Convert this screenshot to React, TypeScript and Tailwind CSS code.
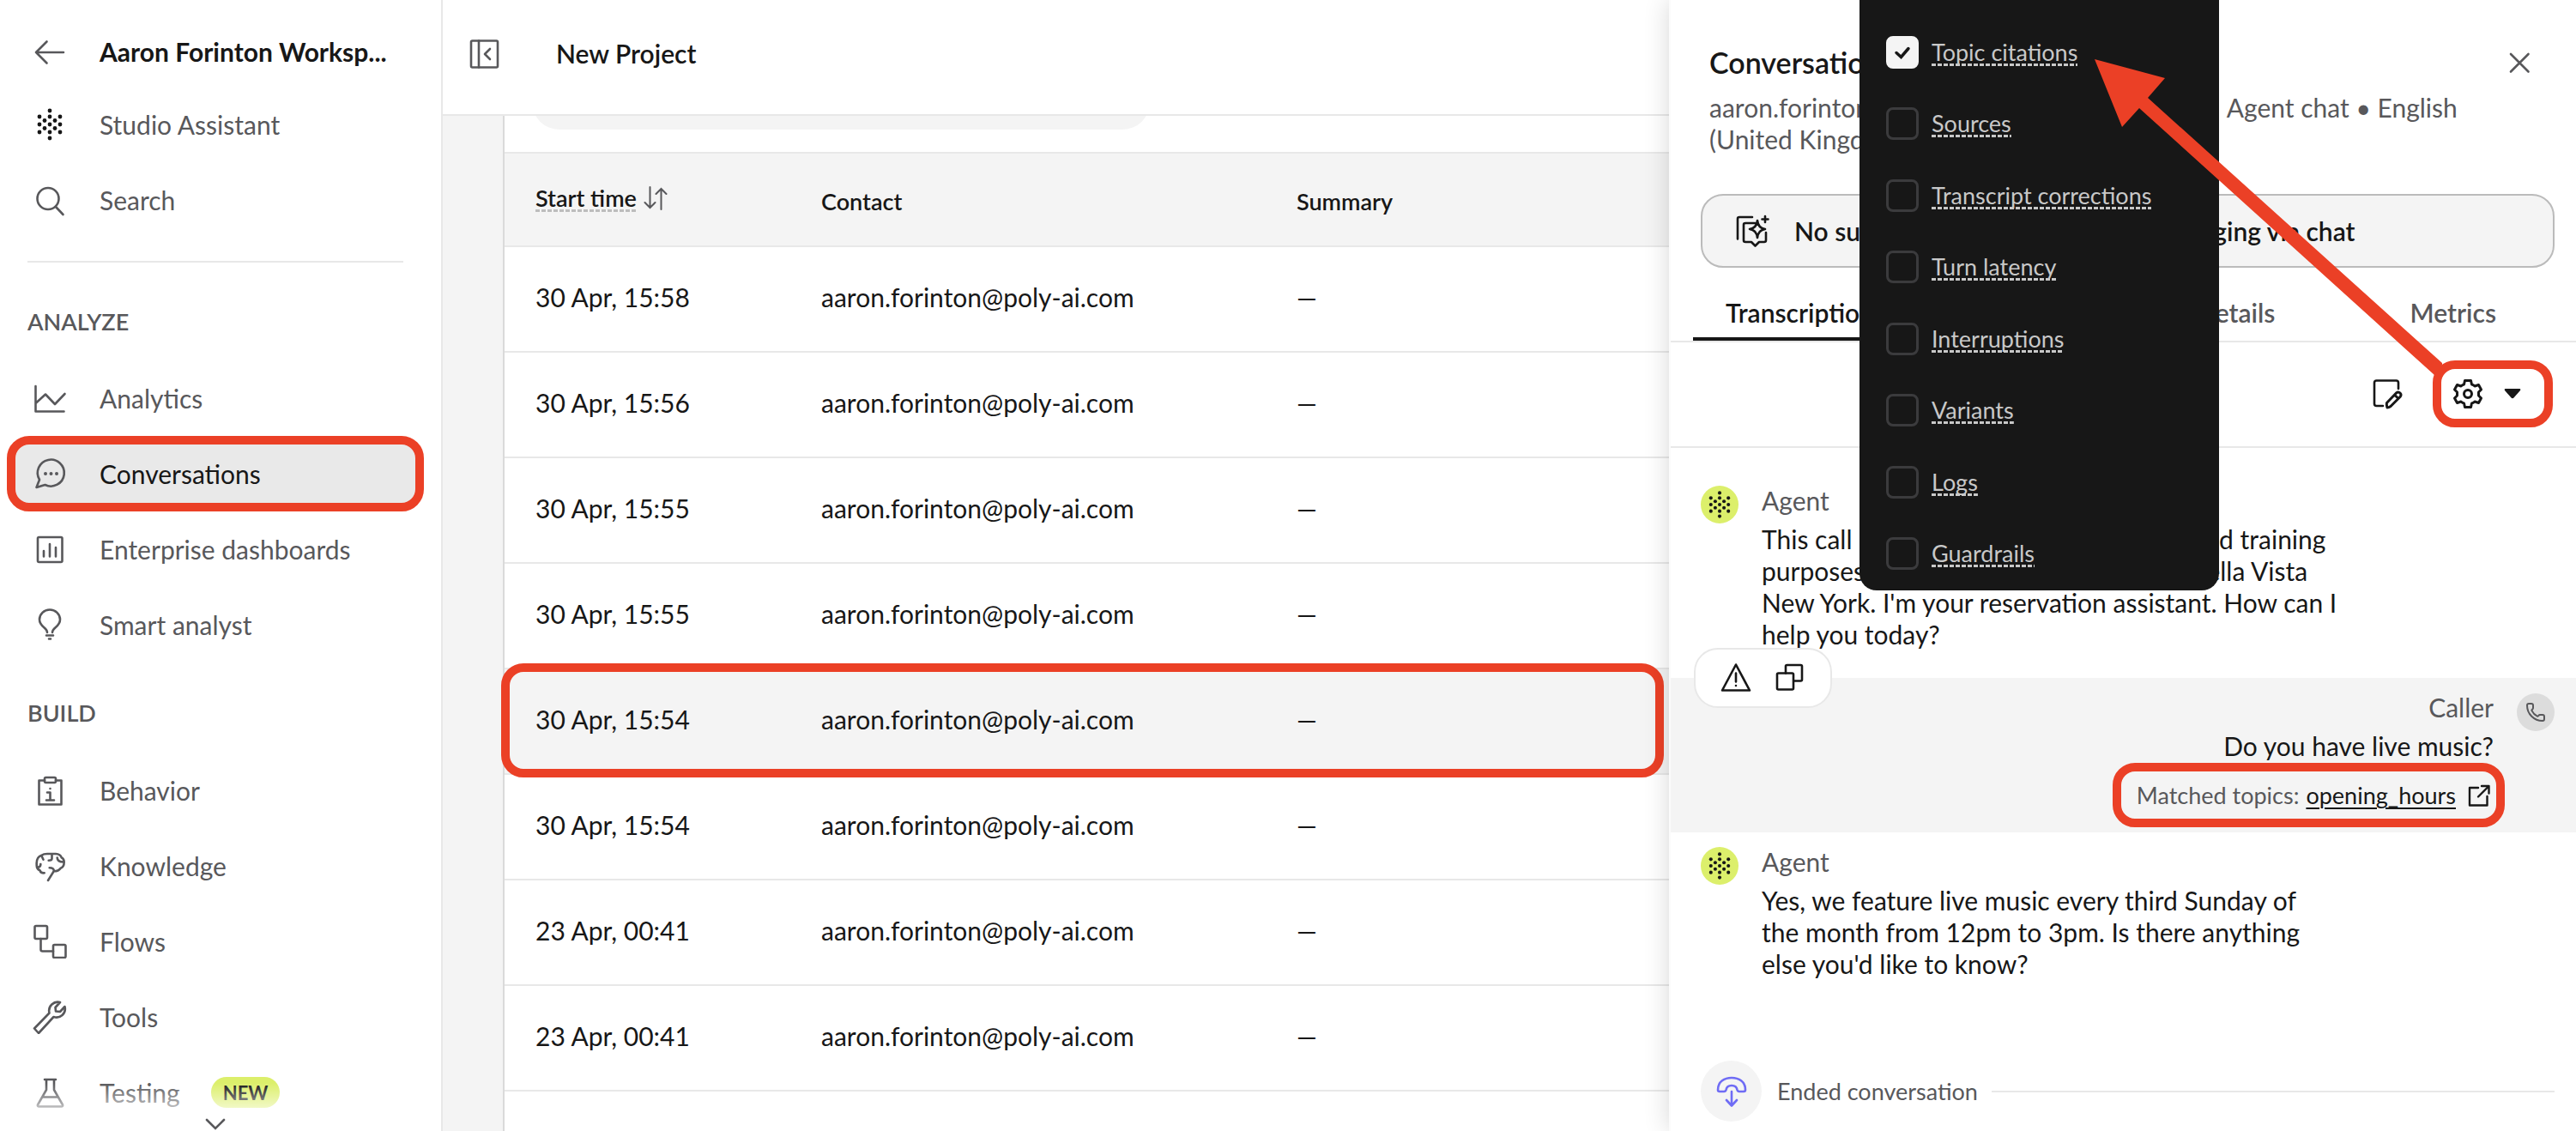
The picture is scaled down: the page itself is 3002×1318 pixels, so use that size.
import type { ReactNode } from "react";
import { Phone } from "lucide-react";

type IconProps = { children: ReactNode; className?: string };

function Icon({ children, className = "size-10" }: IconProps) {
  return (
    <svg
      viewBox="0 0 40 40"
      fill="none"
      stroke="currentColor"
      strokeWidth="2.6"
      strokeLinecap="round"
      strokeLinejoin="round"
      aria-hidden="true"
      className={`shrink-0 ${className}`}
    >
      {children}
    </svg>
  );
}

const dots = [
  [20, 4], [20, 11], [20, 20], [20, 29], [20, 36],
  [14, 15.5], [14, 24.5], [26, 15.5], [26, 24.5],
  [8, 11], [8, 20], [8, 29], [32, 11], [32, 20], [32, 29],
];

function DotsIcon({ className = "size-10" }: { className?: string }) {
  return (
    <svg viewBox="0 0 40 40" aria-hidden="true" className={`shrink-0 fill-[#171717] ${className}`}>
      {dots.map(([x, y]) => (
        <circle key={`${x}-${y}`} cx={x} cy={y} r="2.4" />
      ))}
    </svg>
  );
}

const analyze = [
  {
    label: "Analytics",
    icon: <path d="M3.5 6v29.5h33M3.5 26 15 15.5 26 27l11.500-12" />,
  },
  {
    label: "Conversations",
    active: true,
    icon: (
      <>
        <path d="M4.500 36 8 27A15.500 15.500 0 1 1 14.500 33Z" />
        <path strokeWidth="4" d="M15 20h0M21.500 20h0M28 20h0" />
      </>
    ),
  },
  {
    label: "Enterprise dashboards",
    icon: (
      <>
        <rect x="6" y="6" width="28.500" height="29" rx="1.500" />
        <path d="M13 22v6.500M20 14v14.500M27 18v10.500" />
      </>
    ),
  },
  {
    label: "Smart analyst",
    icon: (
      <path d="M17 29c0-6-9-6.500-9-15a12 11.500 0 0 1 24 0c0 8.500-9 9-9 15M16 32.500h8M19 36.500h2" />
    ),
  },
];

const build = [
  {
    label: "Behavior",
    icon: (
      <>
        <path d="M14 8.500H7.500v28h26v-28H27" />
        <rect x="14" y="5" width="13" height="6" rx="1.500" />
        <path d="M17 22.500h3.500v9M16 31.500h9M20.500 18h0" />
      </>
    ),
  },
  {
    label: "Knowledge",
    icon: (
      <path d="M13.700 28.300C11 28.500 9 27.500 8.700 25.500 5.500 24 4.500 22 4.700 18.500 4.300 13 6.500 9 10.500 7.700 12.500 6.200 14.500 6 17 6h10c3 .2 5.700 1.500 6.700 4.300 2.300 1.200 3 3 3 5.200 0 4-1.200 6.200-4 7.200-1.500 2.200-4.200 3.600-8 3.600L18 37M24.700 26.300c.3-2.500-1.500-4-5-4M22.500 6.500v5q0 2.200-3.800 2.200M10.300 8l2.200 4.700M9.300 18c.2 2-.8 3.500-4 4M28.700 10.500c0 3 1.500 5 7.500 5" />
    ),
  },
  {
    label: "Flows",
    icon: (
      <>
        <rect x="2.500" y="2" width="14.500" height="15" rx="1.500" />
        <rect x="24" y="24" width="14.500" height="15" rx="1.500" />
        <path d="M9.500 17v12.500q0 2 2 2H24" />
      </>
    ),
  },
  {
    label: "Tools",
    icon: (
      <path d="M32 3C25 1 17.500 7.500 19.500 15.500L2 33.500l5 5.500 17.500-19C32 22.500 39.500 16 37.500 8L32 14l-5-.5-.5-4.500Z" />
    ),
  },
  {
    label: "Testing",
    badge: "NEW",
    icon: <path d="M14 5h13M16 5v12L6 34.500q-.5 2 1.500 2h26q2 0 1.500-2L25 17V5M11.500 25.500h18" />,
  },
];

type NavItemProps = {
  label: string;
  icon: ReactNode;
  active?: boolean;
  badge?: string;
};

function NavItem({ label, icon, active, badge }: NavItemProps) {
  return (
    <li className="relative">
      <a
        href="#"
        className={`flex h-[72px] items-center rounded-2xl pl-[22px] ${
          active ? "bg-[#e9e9e9] text-[#171717]" : "text-[#58585b]"
        }`}
      >
        <span className="mr-[38px] flex text-[#58585b]">{icon}</span>
        <span>{label}</span>
        {badge && (
          <span className="ml-9 flex h-9 items-center rounded-full bg-[#dcef6b] px-3.5 text-[22px] font-bold text-[#171717]">
            {badge}
          </span>
        )}
      </a>
      {active && (
        <span className="pointer-events-none absolute -inset-2 rounded-[26px] border-10 border-[#eb4026]" />
      )}
    </li>
  );
}

function Sidebar() {
  return (
    <aside className="relative w-[516px] shrink-0 overflow-hidden border-r-2 border-[#e8e8e8] px-4">
      <a href="#" className="mt-6 flex h-[72px] items-center gap-[38px] pl-[22px] font-bold text-[#171717]">
        <Icon className="size-10 text-[#58585b]">
          <path d="M36 21H4M16.500 8.500 4 21l12.500 12.500" />
        </Icon>
        <span>Aaron Forinton Worksp...</span>
      </a>
      <ul className="mt-[13px] mr-3 flex flex-col gap-4">
        <NavItem label="Studio Assistant" icon={<DotsIcon />} />
        <NavItem
          label="Search"
          icon={
            <Icon>
              <circle cx="18" cy="18.500" r="12.500" />
              <path d="m27 28 8.500 9" />
            </Icon>
          }
        />
      </ul>
      <hr className="mt-[35px] mr-7 ml-4 border-t-2 border-[#e8e8e8]" />
      <h2 className="mt-[51px] pl-4 text-[27px] leading-9 font-semibold text-[#58585b]">ANALYZE</h2>
      <ul className="mt-[35px] mr-3 flex flex-col gap-4">
        {analyze.map((item) => (
          <NavItem key={item.label} {...item} icon={<Icon>{item.icon}</Icon>} />
        ))}
      </ul>
      <h2 className="mt-[49px] pl-4 text-[27px] leading-9 font-semibold text-[#58585b]">BUILD</h2>
      <ul className="mt-9 mr-3 flex flex-col gap-4">
        {build.map((item) => (
          <NavItem key={item.label} {...item} icon={<Icon>{item.icon}</Icon>} />
        ))}
      </ul>
      {/* Scroll hint */}
      <div className="absolute inset-x-0 bottom-0 flex h-14 items-end justify-center bg-linear-to-b from-white/0 to-white to-85% pr-3">
        <svg viewBox="0 0 24 16" fill="none" className="h-4 w-6 text-[#58585b]" aria-hidden="true">
          <path d="m2 3 10 10L22 3" stroke="currentColor" strokeWidth="2.600" strokeLinecap="round" />
        </svg>
      </div>
    </aside>
  );
}

const rows = [
  "30 Apr, 15:58",
  "30 Apr, 15:56",
  "30 Apr, 15:55",
  "30 Apr, 15:55",
  "30 Apr, 15:54",
  "30 Apr, 15:54",
  "23 Apr, 00:41",
  "23 Apr, 00:41",
];
const selectedRow = 4;

function ConversationsTable() {
  return (
    <table className="w-full table-fixed border-collapse text-left">
      <thead>
        <tr className="h-[109px] border-y-2 border-[#e8e8e8] bg-[#f4f4f4] text-[27px]">
          <th className="w-[333px] pb-1 pl-9 font-semibold">
            <button type="button" className="flex items-center gap-2">
              <span className="bg-[repeating-linear-gradient(90deg,#bdbdbd_0_5px,transparent_5px_7px)] bg-[length:100%_3px] bg-bottom bg-no-repeat leading-8">
                Start time
              </span>
              <svg viewBox="0 0 28 28" fill="none" className="size-7 text-[#58585b]" aria-hidden="true">
                <path
                  d="M7.500 1v24M1.500 19l6 6 6-6M20.500 27V3M14.500 9l6-6 6 6"
                  stroke="currentColor"
                  strokeWidth="2"
                  strokeLinecap="round"
                />
              </svg>
            </button>
          </th>
          <th className="w-[554px] pt-1 pl-9 font-semibold">Contact</th>
          <th className="pt-1 pl-9 font-semibold">Summary</th>
        </tr>
      </thead>
      <tbody>
        {rows.map((time, i) => (
          <tr
            key={i}
            className={`relative h-[123px] border-b-2 border-[#e8e8e8] ${i === selectedRow ? "bg-[#f4f4f4]" : ""}`}
          >
            <td className="pb-1 pl-9">
              {time}
              {i === selectedRow && (
                <span className="pointer-events-none absolute -inset-y-1.5 right-1.5 -left-1 rounded-[26px] border-10 border-[#eb4026]" />
              )}
            </td>
            <td className="pb-1 pl-9">aaron.forinton@poly-ai.com</td>
            <td className="pb-1 pl-9">—</td>
          </tr>
        ))}
      </tbody>
    </table>
  );
}

function Main() {
  return (
    <main className="flex min-w-0 flex-1 flex-col">
      <header className="flex h-[135px] shrink-0 items-center gap-16 border-b-2 border-[#e8e8e8] pb-2 pl-7">
        <button type="button" aria-label="Collapse sidebar" className="text-[#58585b]">
          <Icon>
            <rect x="5" y="4.500" width="31" height="31" rx="1.500" />
            <path d="M14 4.500v31M27 14l-6 6 6 6" />
          </Icon>
        </button>
        <h1 className="font-semibold">New Project</h1>
      </header>
      <div className="flex-1 overflow-hidden bg-[#f4f4f4] pl-[70px]">
        <div className="h-full border-l-2 border-[#dadada] bg-white">
          <div className="h-[42px] overflow-hidden pl-8">
            <div className="-mt-12 h-16 w-[720px] rounded-[32px] bg-[#f4f4f4]" />
          </div>
          <ConversationsTable />
        </div>
      </div>
    </main>
  );
}

function AgentMessage({ children }: { children: ReactNode }) {
  return (
    <div className="flex gap-[27px] pl-[35px]">
      <span className="mt-px flex size-11 shrink-0 items-center justify-center rounded-full bg-[#dcef6b]">
        <DotsIcon className="size-[34px]" />
      </span>
      <div>
        <p className="text-[#58585b]">Agent</p>
        <p className="mt-2">{children}</p>
      </div>
    </div>
  );
}

function CallerMessage() {
  return (
    <div className="relative mt-8 flex justify-end gap-[27px] bg-[#f4f4f4] pt-4 pr-[25px] pb-[25px]">
      <div className="flex flex-col items-end">
        <p className="text-[#58585b]">Caller</p>
        <p className="mt-2">Do you have live music?</p>
        <div className="relative mt-5 flex items-center text-[27px] text-[#58585b]">
          <span>Matched topics:</span>
          <a href="#" className="ml-2 text-[#171717] underline decoration-2 underline-offset-4">
            opening_hours
          </a>
          <svg viewBox="0 0 26 26" fill="none" className="mr-1 ml-3.5 size-[26px] text-[#171717]" aria-hidden="true">
            <path
              d="M12 4H2v20.500h20.500V14M16 2h8.500v8.500M24 2.500 12 14.500"
              stroke="currentColor"
              strokeWidth="2.400"
              strokeLinecap="round"
              strokeLinejoin="round"
            />
          </svg>
          <span className="pointer-events-none absolute -inset-y-[19px] -right-[13px] -left-7 rounded-[26px] border-10 border-[#eb4026]" />
        </div>
      </div>
      <span className="mt-0.5 flex size-11 items-center justify-center rounded-full bg-[#dcdcdc] text-[#58585b]">
        <Phone className="size-6" strokeWidth={2} />
      </span>

      {/* Hover actions */}
      <div className="absolute -top-[35px] left-[27px] flex h-[70px] w-[161px] items-center justify-center gap-6 rounded-[28px] border-2 border-[#e8e8e8] bg-white">
        <button type="button" aria-label="Report issue">
          <Icon>
            <path d="M20 4.500 36 34.500H4ZM20 14.500v10M20 29h0" />
          </Icon>
        </button>
        <button type="button" aria-label="Copy">
          <Icon>
            <path d="M14 14.500V6.500q0-1.500 1.500-1.500h16q1.500 0 1.500 1.500V22q0 1.500-1.500 1.500H24" />
            <rect x="4" y="14.500" width="19" height="19" rx="1.500" />
          </Icon>
        </button>
      </div>
    </div>
  );
}

const options = [
  "Topic citations",
  "Sources",
  "Transcript corrections",
  "Turn latency",
  "Interruptions",
  "Variants",
  "Logs",
  "Guardrails",
];

function OptionsMenu() {
  return (
    <div className="absolute top-0 right-[416px] flex h-[688px] w-[419px] flex-col justify-between rounded-b-[20px] bg-[#171717] pt-[42px] pb-6 pl-[31px] text-[27px] text-[#c8c8c8]">
      {options.map((option, i) => (
        <label key={option} className="flex h-[38px] items-center gap-[15px]">
          <span className="relative flex size-[38px]">
            <input
              type="checkbox"
              defaultChecked={i === 0}
              className="peer size-[38px] appearance-none rounded-lg border-3 border-[#3b3b3d] checked:border-[#f4f4f4] checked:bg-[#f4f4f4]"
            />
            <svg
              viewBox="0 0 38 38"
              fill="none"
              aria-hidden="true"
              className="pointer-events-none absolute inset-0 hidden text-[#171717] peer-checked:block"
            >
              <path d="m12 19.500 5.500 5 8.500-10" stroke="currentColor" strokeWidth="3.500" strokeLinecap="round" />
            </svg>
          </span>
          <span className="bg-[repeating-linear-gradient(90deg,#c8c8c8_0_5px,transparent_5px_7px)] bg-[length:100%_3px] bg-bottom bg-no-repeat leading-8">
            {option}
          </span>
        </label>
      ))}
    </div>
  );
}

function ConversationPanel() {
  return (
    <aside className="relative w-[1057px] shrink-0 border-l-2 border-[#fbfbfb] bg-white shadow-[0_0_28px_rgba(0,0,0,0.16)]">
      <div className="flex items-start justify-between pt-[52px] pr-[46px] pl-[45px]">
        <div>
          <h2 className="text-[34px] leading-[42px] font-semibold">Conversation</h2>
          <p className="mt-[13px] text-[#58585b]">
            aaron.forinton@poly-ai.com • 30 Apr 15:54 • Agent chat • English
            <br />
            (United Kingdom)
          </p>
        </div>
        <button type="button" aria-label="Close" className="text-[#58585b]">
          <Icon>
            <path d="m10 11 20.500 20.500M30.500 11 10 31.500" />
          </Icon>
        </button>
      </div>

      <div className="mt-[45px] mr-[25px] ml-[35px] flex h-[86px] items-center gap-[29px] rounded-[26px] border-2 border-[#bbb] bg-[#f4f4f4] pl-[38px] font-semibold">
        <Icon>
          <path d="M3 29.500V6q0-2 2-2h15M23 11H12q-2 0-2 2v18q0 2 2 2h7l4.500 4.500L28 33h6q2 0 2-2V22" />
          <path d="M26 8q1 9 9 10-8 1-9 10-1-9-9-10 8-1 9-10ZM35 3v7M31.500 6.500h7" />
        </Icon>
        No summary is available when messaging via chat
      </div>

      <div role="tablist" className="flex h-[87px] items-end justify-between border-b-2 border-[#e8e8e8] pr-[55px] pl-[26px] font-semibold text-[#58585b]">
        <button type="button" role="tab" aria-selected="true" className="h-[62px] border-b-4 border-[#171717] px-[38px] text-[#171717]">
          Transcription
        </button>
        <button type="button" role="tab" aria-selected="false" className="h-[62px] border-b-4 border-transparent px-[38px]">
          Logs
        </button>
        <button type="button" role="tab" aria-selected="false" className="h-[62px] border-b-4 border-transparent px-[38px]">
          Details
        </button>
        <button type="button" role="tab" aria-selected="false" className="h-[62px] border-b-4 border-transparent px-[38px]">
          Metrics
        </button>
      </div>

      <div className="flex h-[123px] items-center justify-end gap-8 border-b-2 border-[#e8e8e8] pr-[27px] pb-0.5">
        <button type="button" aria-label="Add note" className="flex items-center">
          <Icon>
            <path d="M32 14V7q0-2.500-2.500-2.500h-23Q4 4.500 4 7v24.500Q4 34 6.500 34H14" />
            <path strokeWidth="3" d="m18.500 30.500 11-11.500q2.500-2 4.500 0t0 4.500L23 34.500q-2 1.500-4 1.500-1-3-.5-5.500ZM29 22.500l2 2" />
          </Icon>
        </button>
        <div className="relative">
          <button type="button" aria-label="Display options" className="flex h-[78px] w-[140px] items-center gap-[22px] pl-[21px]">
            <Icon>
              <path
                strokeWidth="3"
                d="M16.500 4.500h7l1 4.500q2 .5 3.500 2l4.500-1.500 3 5.500-3 3v4l3 3-3 5.500L28 29q-1.500 1.500-3.500 2l-1 4.500h-7l-1-4.500q-2-.5-3.500-2l-4.500 1.500-3-5.500 3-3v-4l-3-3 3-5.500L12 11q1.500-1.500 3.500-2Z"
              />
              <circle cx="20" cy="20" r="4.500" strokeWidth="3" />
            </Icon>
            <svg viewBox="0 0 20 12" className="h-3 w-5 fill-[#171717]" aria-hidden="true">
              <path d="M1.500 0h17q1.500.5.5 2l-7.500 8.500q-1.500 1.500-3 0L1 2Q0 .5 1.500 0Z" />
            </svg>
          </button>
          <span className="pointer-events-none absolute inset-0 rounded-[26px] border-10 border-[#eb4026]" />
        </div>
      </div>

      <div className="pt-[43px]">
        <AgentMessage>
          This call might be recorded for quality and training
          <br />
          purposes. Hello! Thank you for calling Bella Vista
          <br />
          New York. I'm your reservation assistant. How can I
          <br />
          help you today?
        </AgentMessage>
        <CallerMessage />
        <div className="mt-4">
          <AgentMessage>
            Yes, we feature live music every third Sunday of
            <br />
            the month from 12pm to 3pm. Is there anything
            <br />
            else you'd like to know?
          </AgentMessage>
        </div>
        <div className="mt-[94px] flex items-center pr-[25px] pl-[35px] text-[27px] text-[#58585b]">
          <span className="flex size-[71px] items-center justify-center rounded-full bg-[#f4f4f4] text-[#6f6cf5]">
            <Icon>
              <path d="M4 18C4 8 12 4 20 4s16 4 16 14q0 2-2 2h-5q-2 0-2.500-2c-.5-3-3-5-6.500-5s-6 2-6.500 5q-.5 2-2.500 2H6q-2 0-2-2ZM20 20v16M14 30l6 6.500 6-6.500" />
            </Icon>
          </span>
          <span className="ml-[18px]">Ended conversation</span>
          <hr className="ml-4 flex-1 border-t-2 border-[#e8e8e8]" />
        </div>
      </div>

      <OptionsMenu />

      {/* Callout arrow from the gear button to the first option */}
      <svg viewBox="0 0 405 368" className="pointer-events-none absolute top-[69px] right-[156px] w-[405px] fill-[#eb4026]" aria-hidden="true">
        <path d="M0 0 82 22 62 45 406 355 396 368 52 57 32 79Z" />
      </svg>
    </aside>
  );
}

export default function App() {
  return (
    <div className="flex h-screen overflow-hidden bg-white font-['Lato',sans-serif] text-[30px] leading-[37px] text-[#171717]">
      <Sidebar />
      <Main />
      <ConversationPanel />
    </div>
  );
}
